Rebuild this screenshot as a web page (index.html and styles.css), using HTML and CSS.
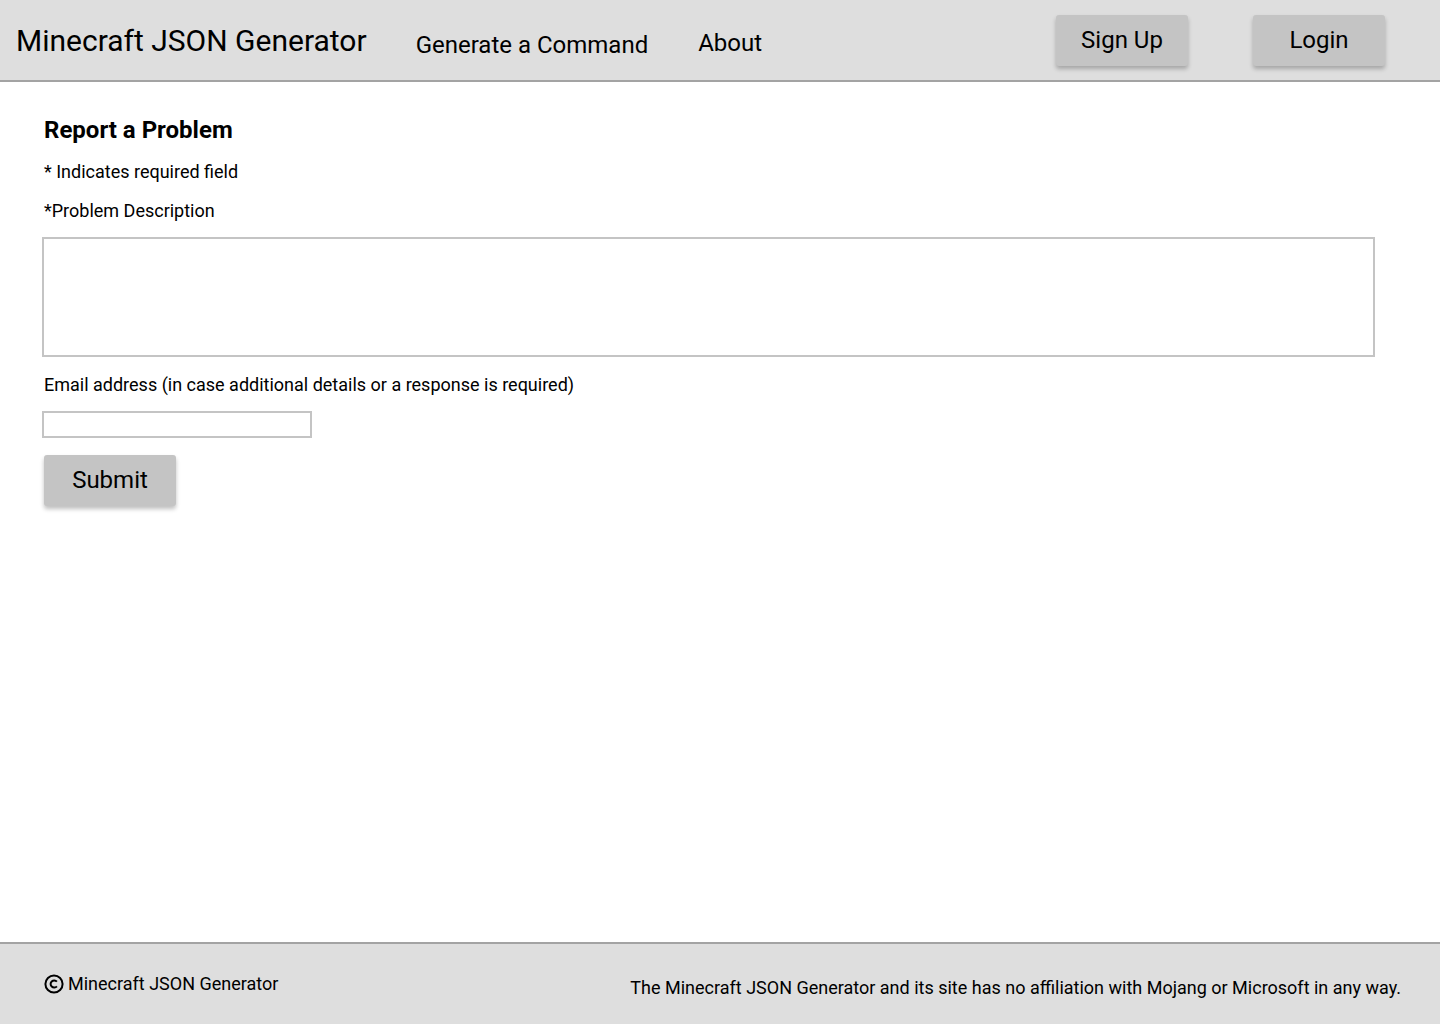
FILE: index.html
```html
<!DOCTYPE html>
<html lang="en">
<head>
<meta charset="utf-8">
<title>Report a Problem - Minecraft JSON Generator</title>
<link rel="stylesheet" href="styles.css">
</head>
<body>
<div class="page">
  <header class="topbar">
    <div class="brand">Minecraft JSON Generator</div>
    <nav class="nav">
      <a class="nav-link nav-gen" href="#">Generate a Command</a>
      <a class="nav-link nav-about" href="#">About</a>
    </nav>
    <div class="auth">
      <button class="btn">Sign Up</button>
      <button class="btn">Login</button>
    </div>
  </header>

  <main class="content">
    <h1 class="title">Report a Problem</h1>
    <p class="note">* Indicates required field</p>
    <label class="label" for="desc">*Problem Description</label>
    <textarea id="desc" class="textarea"></textarea>
    <label class="label" for="email">Email address (in case additional details or a response is required)</label>
    <input id="email" class="input" type="email">
    <button class="btn btn-submit">Submit</button>
  </main>

  <footer class="footer">
    <div class="copy">
      <svg class="copy-icon" width="20" height="20" viewBox="0 0 20 20" aria-hidden="true">
        <circle cx="10" cy="10" r="8.6" fill="none" stroke="#000" stroke-width="2"/>
        <path d="M12.9 7.6 A3.6 3.6 0 1 0 12.9 12.4" fill="none" stroke="#000" stroke-width="2" stroke-linecap="butt"/>
      </svg>
      <span>Minecraft JSON Generator</span>
    </div>
    <div class="disclaimer">The Minecraft JSON Generator and its site has no affiliation with Mojang or Microsoft in any way.</div>
  </footer>
</div>
</body>
</html>
```

FILE: styles.css
```css
* { box-sizing: border-box; }

html, body {
  margin: 0;
  padding: 0;
  background: #ffffff;
  font-family: Roboto, "Liberation Sans", Arial, sans-serif;
  color: #000;
}

.page {
  display: flex;
  flex-direction: column;
  min-height: 1024px;
}

/* Header */
.topbar {
  display: flex;
  align-items: center;
  height: 82px;
  background: #dedede;
  border-bottom: 2px solid #a3a3a3;
  padding: 0 55px 0 16px;
}

.brand {
  font-size: 30px;
  line-height: 36px;
  margin-top: 1px;
}

.nav {
  display: flex;
  gap: 50px;
  margin-left: 49px;
}

.nav-link {
  color: #000;
  text-decoration: none;
  font-size: 24px;
  line-height: 28px;
}

.nav-gen { margin-top: 9px; }
.nav-about { margin-top: 7px; }

.auth {
  display: flex;
  gap: 65px;
  margin-left: auto;
  margin-top: 1px;
}

.btn {
  width: 132px;
  height: 51px;
  border: none;
  border-radius: 3px;
  background: #c4c4c4;
  box-shadow: 0 3px 4px rgba(0, 0, 0, 0.25);
  font-family: Roboto, "Liberation Sans", Arial, sans-serif;
  font-size: 24px;
  color: #000;
  padding: 0 0 2px;
  cursor: pointer;
}

/* Main */
.content {
  flex: 1;
  display: flex;
  flex-direction: column;
  align-items: flex-start;
  padding: 34px 0 0 44px;
}

.title {
  margin: 0;
  font-size: 24px;
  line-height: 28px;
  font-weight: 700;
}

.note {
  margin: 17px 0 0;
  font-size: 18px;
  line-height: 22px;
}

.label {
  display: block;
  margin-top: 17px;
  font-size: 18px;
  line-height: 22px;
}

.textarea {
  display: block;
  margin: 15px 0 0 -2px;
  width: 1333px;
  height: 120px;
  border: 2px solid #c4c4c4;
  border-radius: 0;
  resize: none;
  background: #fff;
  outline: none;
}

.textarea + .label { margin-top: 17px; }

.input {
  display: block;
  margin: 15px 0 0 -2px;
  width: 270px;
  height: 27px;
  border: 2px solid #c4c4c4;
  border-radius: 0;
  background: #fff;
  outline: none;
  padding: 0 4px;
}

.btn-submit {
  margin-top: 17px;
}

/* Footer */
.footer {
  display: flex;
  align-items: center;
  justify-content: space-between;
  height: 82px;
  background: #dedede;
  border-top: 2px solid #a3a3a3;
  padding: 0 39px 0 44px;
  font-size: 18px;
  line-height: 22px;
}

.copy {
  display: flex;
  align-items: center;
  gap: 4px;
  margin-top: 0;
}

.copy-icon { display: block; }

.disclaimer {
  margin-top: 8px;
}
```
